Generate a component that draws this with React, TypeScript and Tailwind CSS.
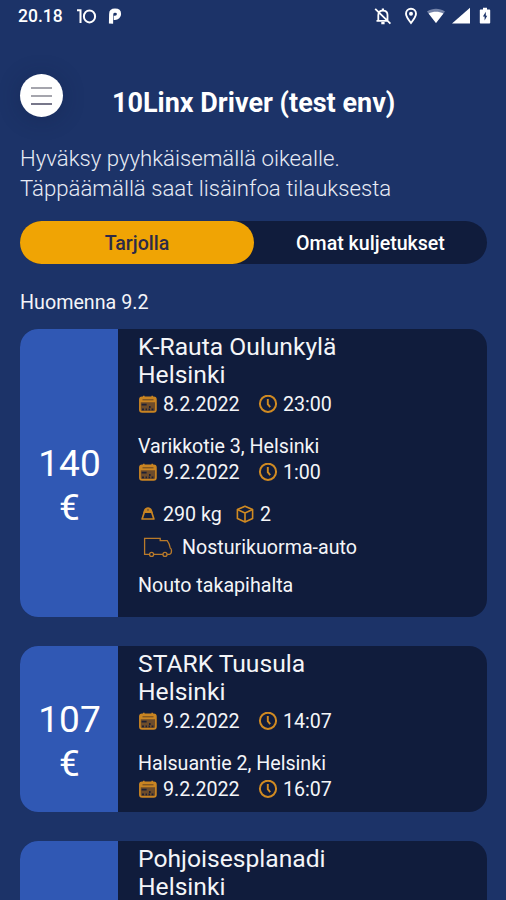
import type { ReactNode } from 'react';

type Stop = { date: string; time: string };

type Order = {
  price: string;
  title: string[];
  pickup?: Stop;
  address?: string;
  delivery?: Stop;
  weight?: string;
  packages?: string;
  vehicle?: string;
  note?: string;
};

const orders: Order[] = [
  {
    price: '140',
    title: ['K-Rauta Oulunkylä', 'Helsinki'],
    pickup: { date: '8.2.2022', time: '23:00' },
    address: 'Varikkotie 3, Helsinki',
    delivery: { date: '9.2.2022', time: '1:00' },
    weight: '290 kg',
    packages: '2',
    vehicle: 'Nosturikuorma-auto',
    note: 'Nouto takapihalta',
  },
  {
    price: '107',
    title: ['STARK Tuusula', 'Helsinki'],
    pickup: { date: '9.2.2022', time: '14:07' },
    address: 'Halsuantie 2, Helsinki',
    delivery: { date: '9.2.2022', time: '16:07' },
  },
  {
    price: '',
    title: ['Pohjoisesplanadi', 'Helsinki'],
  },
];

function CalendarIcon() {
  return (
    <svg width="20" height="20" viewBox="0 0 20 20" fill="none" className="shrink-0 text-[#c98422]">
      <rect x="1.9" y="2.3" width="16" height="14.6" rx="2.2" fill="#6d4c2b" stroke="currentColor" strokeWidth="1.7" />
      <path d="M2 2.700h16v4.600H2z" fill="currentColor" />
      <path d="M5.800 .8v3M14.200 .8v3" stroke="currentColor" strokeWidth="1.6" />
      <path d="M4.500 4.800h11" stroke="#5c4023" strokeWidth="0.900" />
      <path d="M3.600 9.700h5M4 14.300h2M7.600 14.300h1.400M10.600 14.300h1.400M13.600 14.300h1.800M11 12h1.600" stroke="#1d2035" strokeWidth="1.800" />
    </svg>
  );
}

function ClockIcon() {
  return (
    <svg width="20" height="20" viewBox="0 0 20 20" fill="none" className="shrink-0 text-[#d08a22]">
      <circle cx="10" cy="8.800" r="8.100" stroke="currentColor" strokeWidth="2" />
      <path d="M9.800 4v5.200l2.400 3" stroke="currentColor" strokeWidth="1.900" />
    </svg>
  );
}

function WeightIcon() {
  return (
    <svg width="20" height="20" viewBox="0 0 20 20" fill="none" className="shrink-0 text-[#c98422]">
      <path d="M6.300 7.200h7.400l2.200 6.800H4.100z" stroke="currentColor" strokeWidth="1.700" strokeLinejoin="round" />
      <path d="M5.400 8.400C5.400 4.400 7.400 2.300 10 2.300s4.600 2.100 4.600 6.100l-1.500-.6H6.900z" fill="currentColor" />
      <circle cx="10" cy="4.900" r=".6" fill="#101c3c" />
    </svg>
  );
}

function BoxIcon() {
  return (
    <svg width="20" height="20" viewBox="0 0 20 20" fill="none" stroke="currentColor" strokeWidth="1.6" strokeLinejoin="round" className="shrink-0 text-[#d08a22]">
      <path d="M10 1.200 17.600 4.600v8.900L10 17 2.400 13.500V4.600z" />
      <path d="M2.400 4.600 10 8l7.600-3.400M10 8v9" />
    </svg>
  );
}

function TruckIcon() {
  return (
    <svg width="30" height="22" viewBox="0 0 30 22" fill="none" stroke="currentColor" strokeWidth="1.3" className="shrink-0 text-[#b97a2a]">
      <path d="M6.600 17.300H1.600V1.300h15.600v2.400h7c1.500 2 2.700 4.600 3 7.300.9.500 1.300 1.400 1.300 2.600 0 2-.6 3.700-2 3.700h-2.400M10.600 17.300h9.300" />
      <circle cx="8.600" cy="17.400" r="2" />
      <circle cx="22" cy="17.400" r="2" />
    </svg>
  );
}

function StatusBar() {
  return (
    <div className="flex h-8 shrink-0 items-center justify-between pl-[18px] pr-[15px] text-white">
      <div className="flex items-center">
        <span className="w-[58px] text-[17.5px] font-medium">20.18</span>
        <svg width="21" height="16" viewBox="0 0 21 16" fill="none" stroke="currentColor" strokeWidth="2">
          <path d="M1 2.300h3.500V15" />
          <ellipse cx="13.500" cy="8.400" rx="5.600" ry="6" />
        </svg>
        <svg width="14" height="16" viewBox="0 0 14 16" fill="none" stroke="currentColor" strokeWidth="4.200" className="ml-[11px]">
          <path d="M3 15.600 3.200 6.200C3.200 4 4.600 2.700 7 2.700c2.400 0 4 1.200 4 3.300 0 2.400-1.800 3.800-4 3.800H5.800" />
        </svg>
      </div>
      <div className="flex items-center">
        <svg width="18" height="18" viewBox="0 0 18 18" fill="none" stroke="currentColor" strokeWidth="1.800">
          <path d="M4.300 13.800V8c0-2.500 1.800-4.400 4.600-4.400s4.600 1.900 4.600 4.400v5.800M2.500 13.800h11.300M1.200 1.800l15.200 14.800" />
          <path d="M8.900 1.400v2M7.300 16.100h3.300" strokeWidth="2.200" />
        </svg>
        <svg width="14" height="18" viewBox="0 0 14 18" fill="none" stroke="currentColor" strokeWidth="1.900" className="ml-3">
          <path d="M7 16C4 12.200 2 9.400 2 6.800a5 5 0 0 1 10 0c0 2.600-2 5.400-5 9.200z" />
          <circle cx="7" cy="6.700" r="2" fill="currentColor" stroke="none" />
        </svg>
        <svg width="20" height="18" viewBox="0 0 20 18" className="ml-2">
          <path d="M1 4.600C6.500.8 13.500.8 19 4.600L10 16z" fill="#7483a8" />
          <path d="M2.600 6.600c4.400-2.500 10.400-2.500 14.800 0L10 16z" fill="currentColor" />
        </svg>
        <svg width="20" height="18" viewBox="0 0 20 18" className="ml-[5px]">
          <path d="M19 .8v15.800H1z" fill="currentColor" />
        </svg>
        <svg width="12" height="18" viewBox="0 0 12 18" className="ml-2">
          <path d="M4 .8h4v1.800h2.200c.6 0 1 .4 1 1v12c0 .6-.4 1-1 1H1.800c-.6 0-1-.4-1-1v-12c0-.6.4-1 1-1H4z" fill="currentColor" />
          <path d="M6.800 4.800 3.900 9.600H5.600v4L8.200 8.800H6.800z" fill="#1c3368" />
        </svg>
      </div>
    </div>
  );
}

function Info({ icon, children, className }: { icon: ReactNode; children: ReactNode; className?: string }) {
  return (
    <div className={`flex items-center gap-[5px] ${className ?? ''}`}>
      {icon}
      <span>{children}</span>
    </div>
  );
}

function Schedule({ stop }: { stop: Stop }) {
  return (
    <>
      <Info icon={<CalendarIcon />} className="w-[120px]">{stop.date}</Info>
      <Info icon={<ClockIcon />}>{stop.time}</Info>
    </>
  );
}

function OrderCard({ order }: { order: Order }) {
  return (
    <div className="flex min-h-[166px] shrink-0 overflow-hidden rounded-[18px] bg-[#101c3c]">
      <div className="flex w-[98px] shrink-0 flex-col items-center justify-center bg-[#3058b4] pl-px pt-[26px] text-[37px] leading-[44px]">
        {order.price && (
          <>
            <span>{order.price}</span>
            <span>€</span>
          </>
        )}
      </div>
      <div className="flex-1 pb-2 pl-5 pt-1 text-[19.65px] leading-[26px] text-[#f4f5f8]">
        <div className="text-[24.65px] leading-[28px]">
          {order.title.map((line) => (
            <div key={line}>{line}</div>
          ))}
        </div>
        {order.pickup && (
          <div className="mt-px flex h-[30px] items-center">
            <Schedule stop={order.pickup} />
          </div>
        )}
        {order.address && <div className="mt-[13px] h-[27px] leading-[27px]">{order.address}</div>}
        {order.delivery && (
          <div className="flex h-[26px] items-center">
            <Schedule stop={order.delivery} />
          </div>
        )}
        {order.weight && (
          <div className="mt-4 flex h-[26px] items-center">
            <Info icon={<WeightIcon />} className="w-[97px]">{order.weight}</Info>
            <Info icon={<BoxIcon />}>{order.packages}</Info>
          </div>
        )}
        {order.vehicle && (
          <div className="mt-1.5 flex h-7 items-center pl-[5px]">
            <TruckIcon />
            <span className="ml-[9px]">{order.vehicle}</span>
          </div>
        )}
        {order.note && <div className="mb-[10px] mt-[11px]">{order.note}</div>}
      </div>
    </div>
  );
}

export default function App() {
  return (
    <div className="flex h-[900px] w-[506px] flex-col overflow-hidden bg-[#1c3368] font-['Roboto',sans-serif] text-white">
      <StatusBar />

      {/* Header */}
      <header className="mt-[42px] flex h-11 shrink-0 items-start pl-5">
        <button aria-label="Menu" className="flex h-[43px] w-[43px] flex-col items-center justify-center gap-[6px] rounded-full bg-white shadow-[0_2px_22px_rgba(16,28,60,0.3)]">
          <span className="h-[2px] w-[21px] bg-[#a5a5ad]" />
          <span className="h-[2px] w-[21px] bg-[#a5a5ad]" />
          <span className="h-[2px] w-[21px] bg-[#77778a]" />
        </button>
        <h1 className="ml-[49px] mt-[13px] whitespace-nowrap text-[27px] font-bold leading-[32px]">10Linx Driver (test env)</h1>
      </header>

      <p className="mt-[25px] shrink-0 whitespace-nowrap pl-5 text-[22.2px] font-light leading-[30px] text-[#e8ecf5]">
        Hyväksy pyyhkäisemällä oikealle.
        <br />
        Täppäämällä saat lisäinfoa tilauksesta
      </p>

      {/* Tabs */}
      <div className="ml-5 mt-[18px] flex h-[43px] w-[467px] shrink-0 rounded-full bg-[#101c3c] text-[19.6px] font-medium">
        <button className="w-[234px] rounded-full bg-[#f0a404] pt-0.5 text-[#2c2a48]">Tarjolla</button>
        <button className="flex-1 pt-0.5">Omat kuljetukset</button>
      </div>

      <h2 className="mt-[25px] shrink-0 pl-5 text-[19.7px] leading-[28px] text-[#f4f5f8]">Huomenna 9.2</h2>

      <div className="mt-3 flex w-[487px] flex-col gap-[29px] pl-5">
        {orders.map((order) => (
          <OrderCard key={order.title[0]} order={order} />
        ))}
      </div>
    </div>
  );
}
